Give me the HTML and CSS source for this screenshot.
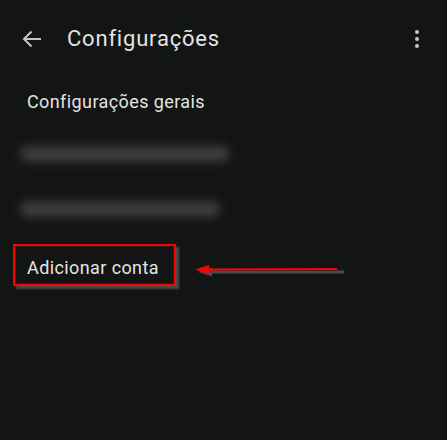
FILE: index.html
```html
<!DOCTYPE html>
<html lang="pt">
<head>
  <meta charset="UTF-8" />
  <meta name="viewport" content="width=device-width, initial-scale=1.0" />
  <title>Configurações</title>
  <link rel="stylesheet" href="styles.css">
</head>
<body>
  <div class="header">
    <svg class="back" width="20" height="18" viewBox="0 0 20 18">
      <path d="M19 9H2M9.5 1.5L2 9l7.5 7.5" fill="none" stroke="#c4c6c4" stroke-width="2" />
    </svg>
    <h1>Configurações</h1>
    <div class="menu"><span></span><span></span><span></span></div>
  </div>

  <div class="list">
    <div class="item">Configurações gerais</div>
    <div class="account"><div class="blur" style="width:210px"></div></div>
    <div class="account"><div class="blur" style="width:200px"></div></div>
    <div class="item add">
      Adicionar conta
      <div class="mark"></div>
      <div class="pointer">
        <svg width="150" height="16" viewBox="0 0 150 16">
          <path d="M16 10L149 10" stroke="#4a4a4a" stroke-width="3" />
          <path d="M3 10l14 -4.5v9z" fill="#4a4a4a" />
          <path d="M13 7.5L142 7" stroke="#f00" stroke-width="2.2" />
          <path d="M0 7.5l14 -4.5v9z" fill="#f00" />
        </svg>
      </div>
    </div>
  </div>
</body>
</html>
```

FILE: styles.css
```css
* { box-sizing: border-box; margin: 0; padding: 0; }
html, body { height: 100%; }
body { font-family: Roboto, "Noto Sans", sans-serif; background: #131514; color: #e3e3e3; overflow: hidden; }
.header { display: flex; align-items: center; height: 76px; padding: 0 22px 0 22px; }
.back { margin-right: 25px; margin-top: 1px; }
.header h1 { flex: 1; font-size: 22px; font-weight: 400; color: #e2e3e1; letter-spacing: 0.8px; }
.menu { display: flex; flex-direction: column; gap: 3px; margin-top: 1px; margin-right: 6px; }
.menu span { width: 4px; height: 4px; border-radius: 50%; background: #c4c6c4; }
.list { display: flex; flex-direction: column; padding: 0 27px; }
.item { font-size: 18px; color: #e4e4e4; height: 50px; display: flex; align-items: center; letter-spacing: 0.4px; }
.account { height: 55px; display: flex; align-items: center; margin-left: -7px; }
.blur { height: 16px; background: #3c3e3d; filter: blur(5px); border-radius: 8px; }
.add { position: relative; margin-top: 3px; height: 56px; }
.mark { position: absolute; left: -14px; top: 5px; width: 163px; height: 42px; border: 2px solid #f00; box-shadow: 3px 3px 2px #4a4a4a, inset 0 0 0 1px #222; }
.pointer { position: absolute; left: 168px; top: 22px; }
```
